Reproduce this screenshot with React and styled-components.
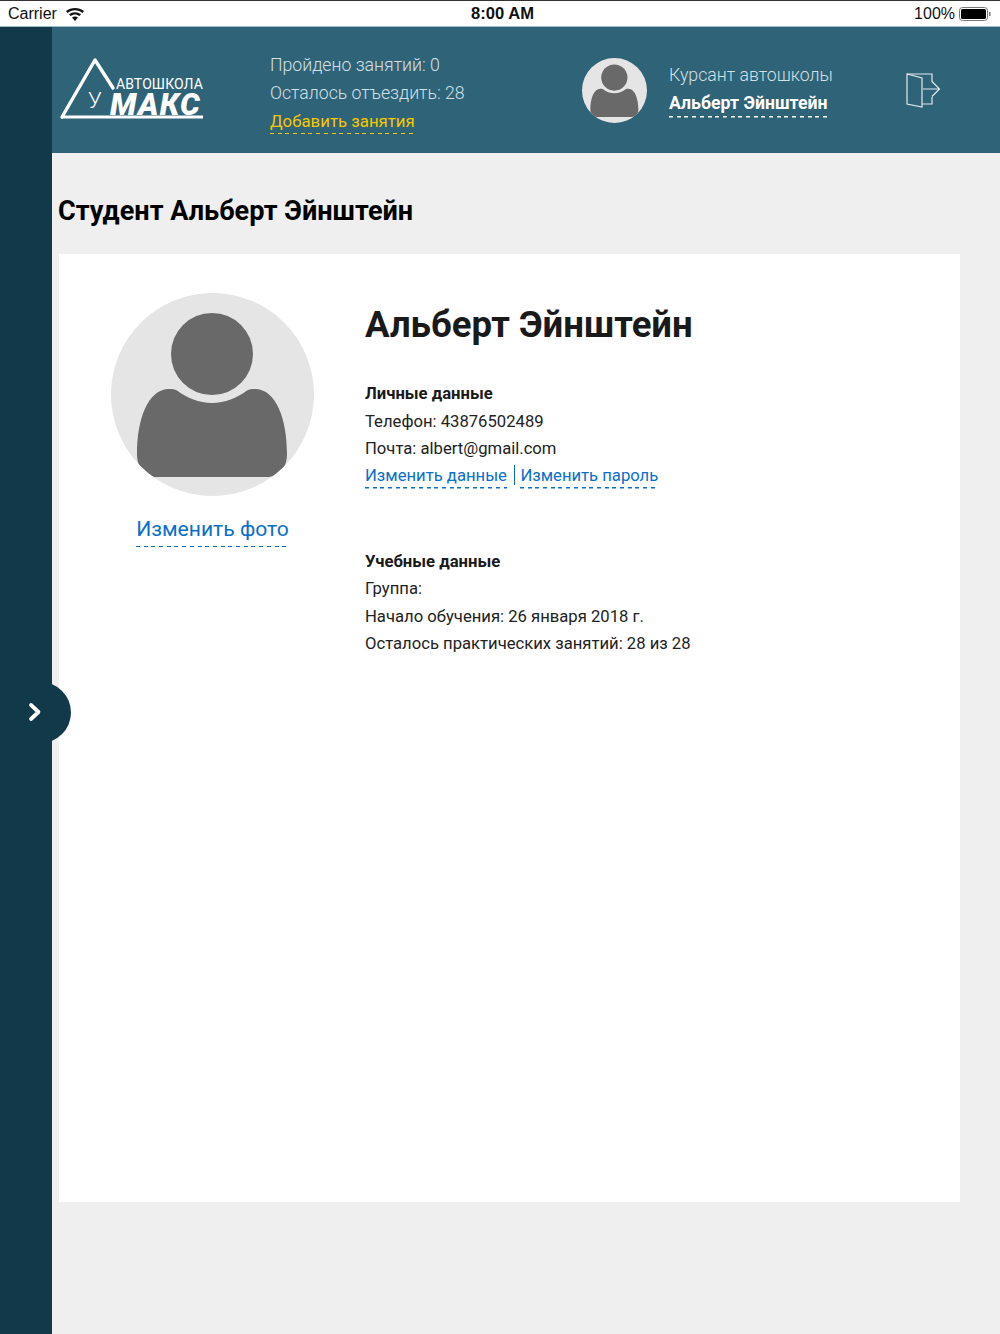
import React from "react";
import styled, { createGlobalStyle, css } from "styled-components";

const GlobalStyle = createGlobalStyle`
  html, body {
    margin: 0;
    padding: 0;
    background: #efefef;
    font-family: Roboto, "Liberation Sans", sans-serif;
  }
`;

const dashed = (color) => css`
  padding-bottom: 1px;
  background: repeating-linear-gradient(90deg, ${color} 0 4px, transparent 4px 7.7px) left bottom / 100% 1.5px no-repeat;
`;

const Page = styled.div`
  width: 1000px;
  height: 1334px;
  display: flex;
  flex-direction: column;
  overflow: hidden;
`;

const StatusBar = styled.div`
  height: 27px;
  flex: none;
  box-sizing: border-box;
  border-top: 1px solid #333;
  border-bottom: 1px solid #9fbbc6;
  background: #fff;
  display: grid;
  grid-template-columns: 1fr auto 1fr;
  align-items: center;
  padding: 1px 8px 0;
  font-family: "Liberation Sans", sans-serif;
  font-size: 16px;
  color: #111;
`;

const StatusLeft = styled.div`
  display: flex;
  align-items: center;
  gap: 9px;
`;

const StatusTime = styled.div`
  font-weight: 700;
  font-size: 16.6px;
  margin-left: 5px;
`;

const StatusRight = styled.div`
  display: flex;
  align-items: center;
  justify-content: flex-end;
  gap: 4px;
`;

const Body = styled.div`
  flex: 1;
  display: flex;
  position: relative;
`;

const Sidebar = styled.div`
  width: 52px;
  flex: none;
  background: #12394a;
`;

const Toggle = styled.div`
  position: absolute;
  left: 10px;
  top: 655px;
  width: 61px;
  height: 61px;
  border-radius: 50%;
  background: #12394a;
  display: flex;
  align-items: center;
  justify-content: center;
  padding: 0 12px 2px 0;
  box-sizing: border-box;
`;

const Main = styled.div`
  flex: 1;
  display: flex;
  flex-direction: column;
  min-width: 0;
`;

const Header = styled.header`
  height: 126px;
  flex: none;
  box-sizing: border-box;
  background: #2f6378;
  display: flex;
  align-items: center;
  padding-left: 7px;
`;

const Logo = styled.svg`
  width: 146px;
  height: 66px;
  flex: none;
  margin-right: 65px;
`;

const Stats = styled.div`
  width: 312px;
  flex: none;
  margin-top: 5px;
  display: flex;
  flex-direction: column;
  align-items: flex-start;
  font-size: 17.7px;
  font-weight: 300;
  line-height: 28px;
  color: #d3e0e5;
`;

const AddLink = styled.a`
  margin-top: 1px;
  color: #f5c800;
  font-size: 16.8px;
  font-weight: 400;
  line-height: 26px;
  ${dashed("#f5c800")}
  padding-bottom: 0;
`;

const Avatar = styled.div`
  width: ${(props) => props.$size}px;
  height: ${(props) => props.$size}px;
  border-radius: 50%;
  background: #e5e5e5;
  flex: none;
  overflow: hidden;
`;

const UserBlock = styled.div`
  display: flex;
  flex-direction: column;
  align-items: flex-start;
  margin: 0 0 2px 22px;
  width: 236px;
  flex: none;
`;

const UserRole = styled.div`
  margin-bottom: 1px;
  font-size: 17.7px;
  font-weight: 300;
  line-height: 28px;
  color: #d3e0e5;
`;

const UserName = styled.a`
  font-size: 17.7px;
  font-weight: 700;
  line-height: 26px;
  color: #fff;
  ${dashed("#fff")}
  padding-bottom: 2px;
`;

const PageTitle = styled.h1`
  margin: 41px 0 26px 6px;
  font-size: 27.1px;
  line-height: 34px;
  font-weight: 700;
  color: #000;
`;

const Card = styled.div`
  margin-left: 7px;
  width: 901px;
  height: 948px;
  flex: none;
  box-sizing: border-box;
  background: #fff;
  display: flex;
  padding: 39px 0 0 52px;
`;

const PhotoColumn = styled.div`
  width: 203px;
  flex: none;
  display: flex;
  flex-direction: column;
  align-items: center;
`;

const ChangePhoto = styled.a`
  margin-top: 15px;
  font-size: 21.1px;
  line-height: 35px;
  color: #0a6fc9;
  ${dashed("#0a6fc9")}
`;

const Info = styled.div`
  margin-left: 51px;
  display: flex;
  flex-direction: column;
  align-items: flex-start;
`;

const Name = styled.h2`
  margin: 9px 0 32px;
  font-size: 36.55px;
  line-height: 46px;
  font-weight: 700;
  color: #1a1a1a;
`;

const Section = styled.div`
  display: flex;
  flex-direction: column;
  align-items: flex-start;
  margin-bottom: ${(props) => props.$gap || 0}px;
  font-size: 16.65px;
  line-height: 27.5px;
  color: #222;
`;

const SectionTitle = styled.div`
  font-weight: 700;
  color: #1a1a1a;
`;

const LinkRow = styled.div`
  display: flex;
  align-items: flex-start;
  color: #0a6fc9;
`;

const EditLink = styled.a`
  color: #0a6fc9;
  line-height: 25px;
  ${dashed("#0a6fc9")}
`;

const Divider = styled.span`
  width: 1.5px;
  height: 20px;
  margin: 2px 5px 0 7px;
  background: #0a6fc9;
`;

const ExitIcon = () => (
  <svg width="36" height="38" viewBox="0 0 36 38" fill="none" stroke="#dfe9ed" strokeWidth="1.2">
    <path d="M2 3 L17 7 V36 L2 33 Z" />
    <path d="M2 3 H27 V11 M27 26 V33 H17" />
    <path d="M18 18 H34 M27 10.5 L34.5 18 L27 25.5" />
  </svg>
);

const PersonIcon = () => (
  <svg width="100%" height="100%" viewBox="0 0 203 203" style={{ display: "block" }}>
    <circle cx="101" cy="61" r="41" fill="#696969" />
    <path
      d="M57 96 C61 96 64 96 66 97.5 C76 105 88 110 101 110 C114 110 126 105 136 97.5 C138 96 141 96 145 96 C165 97 176 126 176 161 C176 175 168 184 156 184 H46 C34 184 26 175 26 161 C26 126 37 97 57 96 Z"
      fill="#696969"
    />
  </svg>
);

const LogoMark = () => (
  <Logo viewBox="0 0 146 66">
    <path d="M3 60 L36 3 L54 31" fill="none" stroke="#fff" strokeWidth="3.4" strokeLinejoin="round" strokeLinecap="round" />
    <path d="M2 60 H144" stroke="#fff" strokeWidth="3" />
    <text x="29" y="51" fontFamily="Roboto" fontSize="22" fontWeight="300" fill="#fff">У</text>
    <text x="57" y="32" fontFamily="Roboto" fontSize="14" fontWeight="400" letterSpacing="0.1" fill="#fff">АВТОШКОЛА</text>
    <text x="51" y="58" fontFamily="Roboto" fontSize="31" fontWeight="900" fontStyle="italic" letterSpacing="1.3" fill="#fff">МАКС</text>
  </Logo>
);

const WifiIcon = () => (
  <svg width="18" height="13" viewBox="0 0 18 13" fill="#111">
    <path d="M9 13 L6 9.6 C7.8 8.2 10.2 8.2 12 9.6 Z" />
    <path d="M4.6 8.1 L3 6.3 C6.4 3.4 11.6 3.4 15 6.3 L13.4 8.1 C10.9 6 7.1 6 4.6 8.1 Z" />
    <path d="M1.6 4.9 L0 3.1 C5.1 -1 12.9 -1 18 3.1 L16.4 4.9 C12.2 1.5 5.8 1.5 1.6 4.9 Z" />
  </svg>
);

const BatteryIcon = () => (
  <svg width="33" height="14" viewBox="0 0 33 14">
    <rect x="0.5" y="0.5" width="28" height="13" rx="3" fill="none" stroke="#777" />
    <rect x="2" y="2" width="25" height="10" rx="1.5" fill="#000" />
    <rect x="30" y="5" width="1.5" height="4" fill="#777" />
  </svg>
);

const App = () => (
  <Page>
    <GlobalStyle />
    <StatusBar>
      <StatusLeft>
        Carrier
        <WifiIcon />
      </StatusLeft>
      <StatusTime>8:00 AM</StatusTime>
      <StatusRight>
        100%
        <BatteryIcon />
      </StatusRight>
    </StatusBar>
    <Body>
      <Sidebar />
      <Toggle>
        <svg width="14" height="20" viewBox="0 0 14 20" fill="none" stroke="#fff" strokeWidth="3.8" strokeLinecap="round" strokeLinejoin="round">
          <path d="M3 3 L10.5 10 L3 17" />
        </svg>
      </Toggle>
      <Main>
        <Header>
          <LogoMark />
          <Stats>
            <div>Пройдено занятий: 0</div>
            <div>Осталось отъездить: 28</div>
            <AddLink>Добавить занятия</AddLink>
          </Stats>
          <Avatar $size={65}>
            <PersonIcon />
          </Avatar>
          <UserBlock>
            <UserRole>Курсант автошколы</UserRole>
            <UserName>Альберт Эйнштейн</UserName>
          </UserBlock>
          <ExitIcon />
        </Header>
        <PageTitle>Студент Альберт Эйнштейн</PageTitle>
        <Card>
          <PhotoColumn>
            <Avatar $size={203}>
              <PersonIcon />
            </Avatar>
            <ChangePhoto>Изменить фото</ChangePhoto>
          </PhotoColumn>
          <Info>
            <Name>Альберт Эйнштейн</Name>
            <Section $gap={59}>
              <SectionTitle>Личные данные</SectionTitle>
              <div>Телефон: 43876502489</div>
              <div>Почта: albert@gmail.com</div>
              <LinkRow>
                <EditLink>Изменить данные</EditLink>
                <Divider />
                <EditLink>Изменить пароль</EditLink>
              </LinkRow>
            </Section>
            <Section>
              <SectionTitle>Учебные данные</SectionTitle>
              <div>Группа:</div>
              <div>Начало обучения: 26 января 2018 г.</div>
              <div>Осталось практических занятий: 28 из 28</div>
            </Section>
          </Info>
        </Card>
      </Main>
    </Body>
  </Page>
);

export default App;
